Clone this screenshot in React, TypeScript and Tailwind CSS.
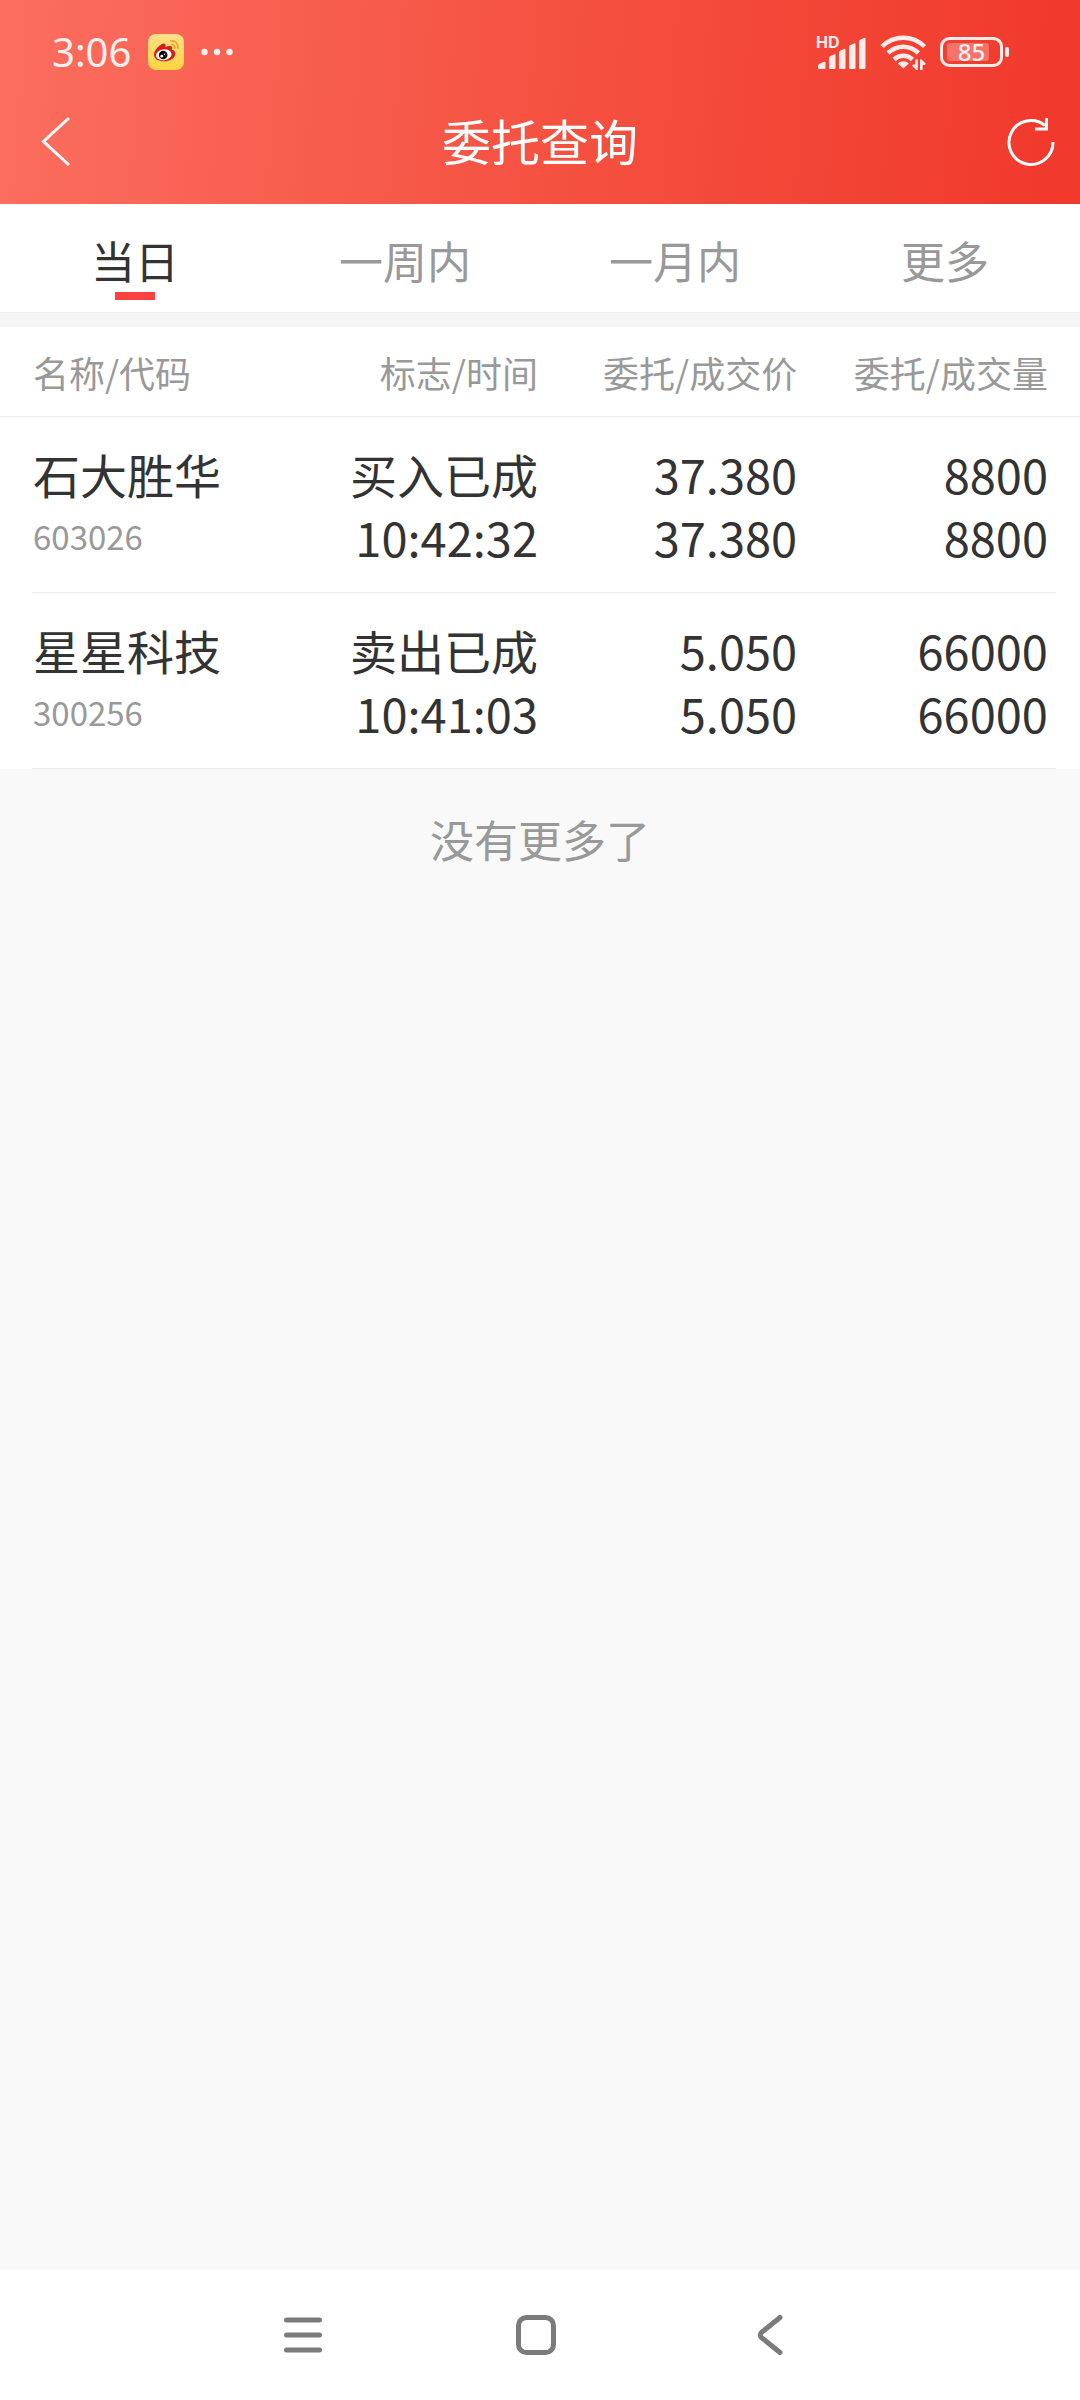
import { useState } from "react";

interface Order {
  name: string;
  code: string;
  flag: string;
  time: string;
  orderPrice: string;
  dealPrice: string;
  orderAmount: string;
  dealAmount: string;
}

const TABS = ["当日", "一周内", "一月内", "更多"];

const ORDERS: Order[] = [
  {
    name: "石大胜华",
    code: "603026",
    flag: "买入已成",
    time: "10:42:32",
    orderPrice: "37.380",
    dealPrice: "37.380",
    orderAmount: "8800",
    dealAmount: "8800",
  },
  {
    name: "星星科技",
    code: "300256",
    flag: "卖出已成",
    time: "10:41:03",
    orderPrice: "5.050",
    dealPrice: "5.050",
    orderAmount: "66000",
    dealAmount: "66000",
  },
];

function WeiboIcon() {
  return (
    <svg viewBox="0 0 36 36" className="w-9 h-9" aria-hidden="true">
      <defs>
        <linearGradient id="weibo-bg" x1="0" y1="0" x2="0" y2="1">
          <stop offset="0" stopColor="#fde08a" />
          <stop offset="1" stopColor="#fdd33f" />
        </linearGradient>
      </defs>
      <rect width="36" height="36" rx="8" fill="url(#weibo-bg)" />
      <path
        d="M6 20.500c0-4 5.500-10 9-10.800 2.200-.5 3 1 2.500 3.300 2.500-1 6-1.500 6.500.3.300.9 0 1.700-.3 2.500 2.300.5 3.600 1.800 3.600 3.900 0 4-5 7.600-11.300 7.600S6 24.500 6 20.500z"
        fill="#d81e1b"
      />
      <ellipse cx="15.800" cy="20.800" rx="7.800" ry="5.400" fill="#fff" transform="rotate(-8 15.800 20.800)" />
      <circle cx="15.200" cy="21" r="4.300" fill="#0a0a0a" />
      <circle cx="13.800" cy="22.200" r="1.400" fill="#fff" />
      <circle cx="16.500" cy="20.200" r=".7" fill="#fff" />
      <g fill="none" stroke="#eaa62b" strokeWidth="1.700" strokeLinecap="round">
        <path d="M22.800 7c4.500-.8 8 3 7.200 7.300" />
        <path d="M23.300 10.700c2.300-.4 4 1.300 3.400 3.500" />
      </g>
    </svg>
  );
}

function SignalIcon() {
  return (
    <svg viewBox="0 -8 52 52" className="w-13 h-13" fill="currentColor" aria-hidden="true">
      <path d="M2 34v-2q0-1.500 1.500-2.200l4.500-2q1.500-.6 1.500 1V34q0 1-1 1H3q-1 0-1-1z" />
      <path d="M13 34V24q0-1.300 1-1.700l4-1.800q1.500-.6 1.500.8V34q0 1-1 1H14q-1 0-1-1z" />
      <path d="M23 34V18.500q0-1.300 1-1.700l4-1.800q1.500-.6 1.500.8V34q0 1-1 1H24q-1 0-1-1z" />
      <path d="M33 34V13q0-1.300 1-1.700l4-1.800q1.500-.6 1.500.8V34q0 1-1 1H34q-1 0-1-1z" />
      <path d="M43 34V7.500q0-1.300 1-1.700l4-1.800q1.500-.6 1.500.8V34q0 1-1 1H44q-1 0-1-1z" />
      <text x="0" y="14" fontSize="16" fontWeight="700" fontFamily="Inter, sans-serif">
        HD
      </text>
    </svg>
  );
}

function WifiIcon() {
  return (
    <svg viewBox="0 0 48 36" className="w-12 h-9" fill="none" aria-hidden="true">
      <g stroke="currentColor" strokeWidth="4.500">
        <path d="M2 12.500c12-11.700 30.500-11.700 42.500 0" />
        <path d="M8 19c9-8.300 21.500-8.300 30.500 0" />
        <path d="M14 25.500c5.300-5 13.200-5 18.500 0" />
      </g>
      <path d="M23.300 34.500l-5.500-5c3-3 8-3 11 0z" fill="currentColor" />
      <path
        d="M35.200 25.500h2.600V36h-1.600L32 31.800l1-1.300h2.200zM40 36V25.500h1.600l4.200 4.200-1 1.300h-2.200v5z"
        fill="currentColor"
      />
    </svg>
  );
}

function BatteryIcon() {
  return (
    <svg viewBox="0 0 70 32" className="w-[70px] h-8" aria-hidden="true">
      <rect x="1.500" y="2.500" width="60" height="27" rx="8" fill="none" stroke="currentColor" strokeWidth="3" />
      <rect x="7" y="7" width="42" height="18" rx="3" fill="currentColor" opacity=".3" />
      <rect x="65" y="11" width="4" height="10" rx="2" fill="currentColor" />
      <text
        x="31.500"
        y="24.500"
        textAnchor="middle"
        fill="currentColor"
        fontSize="24"
        fontWeight="500"
        fontFamily="'Noto Sans', sans-serif"
      >
        85
      </text>
    </svg>
  );
}

function StatusBar() {
  return (
    <div className="flex items-center justify-between h-20 mt-3 pl-[52px] pr-[70px] text-white/90">
      <div className="flex items-center gap-[17px]">
        <span className="font-['Noto_Sans',sans-serif] text-[40px] leading-[40px]">3:06</span>
        <WeiboIcon />
        <svg viewBox="0 0 32 8" className="w-8 h-2" fill="currentColor" aria-hidden="true">
          <circle cx="3.500" cy="4" r="3.200" />
          <circle cx="16" cy="4" r="3.200" />
          <circle cx="28.500" cy="4" r="3.200" />
        </svg>
      </div>
      <div className="flex items-center gap-3">
        <SignalIcon />
        <WifiIcon />
        <BatteryIcon />
      </div>
    </div>
  );
}

export default function App() {
  const [activeTab, setActiveTab] = useState(TABS[0]);

  return (
    <div className="min-h-screen flex flex-col bg-[#f9f9f9] text-[#333] font-['Noto_Sans_CJK_SC',sans-serif]">
      {/* Header */}
      <header className="flex flex-col bg-linear-[95deg] from-[#fb6e5f] via-[#f55242] to-[#f0382b] text-white">
        <StatusBar />
        <div className="flex items-center justify-between h-[100px] mb-3 px-6">
          <button type="button" aria-label="返回" className="w-16 h-16">
            <svg viewBox="0 0 64 64" fill="none" stroke="currentColor" strokeWidth="3">
              <path d="M45 8L19.500 31.500 45 55" />
            </svg>
          </button>
          <h1 className="pb-1 text-[49px] leading-[60px]">委托查询</h1>
          <button type="button" aria-label="刷新" className="w-16 h-16">
            <svg viewBox="0 0 64 64" fill="none" stroke="currentColor" strokeWidth="3">
              <path d="M61 32A22 22 0 1 1 53 15.500" />
              <path d="M54.500 8v11H43" />
            </svg>
          </button>
        </div>
      </header>

      {/* Tabs */}
      <nav className="grid grid-cols-4 h-[109px] bg-white border-b border-[#eee]">
        {TABS.map((tab) => (
          <button
            key={tab}
            type="button"
            onClick={() => setActiveTab(tab)}
            className={`flex flex-col items-center gap-[2px] pt-[26px] text-[44px] leading-[60px] ${
              tab === activeTab ? "text-[#333]" : "text-[#999]"
            }`}
          >
            {tab}
            {tab === activeTab && <span className="w-10 h-2 bg-[#fa4242]" />}
          </button>
        ))}
      </nav>
      <div className="h-[14px] bg-[#f5f5f5]" />

      {/* Orders */}
      <table className="w-full table-fixed bg-white text-right">
        <colgroup>
          <col className="w-[26%]" />
          <col className="w-[24%]" />
          <col className="w-[24%]" />
          <col className="w-[26%]" />
        </colgroup>
        <thead>
          <tr className="relative h-[90px] text-[36px] leading-[50px] text-[#999] after:absolute after:bottom-0 after:inset-x-0 after:h-px after:bg-[#eee]">
            <th className="pl-[33px] text-left font-normal">名称/代码</th>
            <th className="pr-[2px] font-normal">标志/时间</th>
            <th className="pr-[2px] font-normal">委托/成交价</th>
            <th className="pr-8 font-normal">委托/成交量</th>
          </tr>
        </thead>
        <tbody>
          {ORDERS.map((order) => (
            <tr
              key={order.code}
              className="relative h-44 text-[47px] leading-[63px] after:absolute after:bottom-0 after:left-8 after:right-6 after:h-px after:bg-[#eee]"
            >
              <td className="pl-[33px] text-left">
                <div>{order.name}</div>
                <div className="text-[33px] leading-[63px] text-[#999]">{order.code}</div>
              </td>
              <td className="pr-[2px]">
                <div>{order.flag}</div>
                <div>{order.time}</div>
              </td>
              <td className="pr-[2px]">
                <div>{order.orderPrice}</div>
                <div>{order.dealPrice}</div>
              </td>
              <td className="pr-8">
                <div>{order.orderAmount}</div>
                <div>{order.dealAmount}</div>
              </td>
            </tr>
          ))}
        </tbody>
      </table>
      <p className="pt-10 text-center text-[44px] leading-[60px] text-[#999]">没有更多了</p>

      {/* System navigation */}
      <div className="mt-auto flex h-[130px] items-center justify-center gap-[169px] bg-white pr-2 text-[#7b7b7b]">
        <button type="button" aria-label="最近任务" className="w-16 h-16">
          <svg viewBox="0 0 64 64" fill="none" stroke="currentColor" strokeWidth="5" strokeLinecap="round">
            <path d="M15.500 17h33M15.500 32h33M15.500 47h33" />
          </svg>
        </button>
        <button type="button" aria-label="主屏幕" className="w-16 h-16">
          <svg viewBox="0 0 64 64" fill="none" stroke="currentColor" strokeWidth="5">
            <rect x="14.500" y="14.500" width="35" height="35" rx="8" />
          </svg>
        </button>
        <button type="button" aria-label="返回上一级" className="w-16 h-16">
          <svg viewBox="0 0 64 64" fill="none" stroke="currentColor" strokeWidth="5" strokeLinecap="round">
            <path d="M43 14.500L25 29q-3.500 3 0 6L43 49.500" />
          </svg>
        </button>
      </div>
    </div>
  );
}
